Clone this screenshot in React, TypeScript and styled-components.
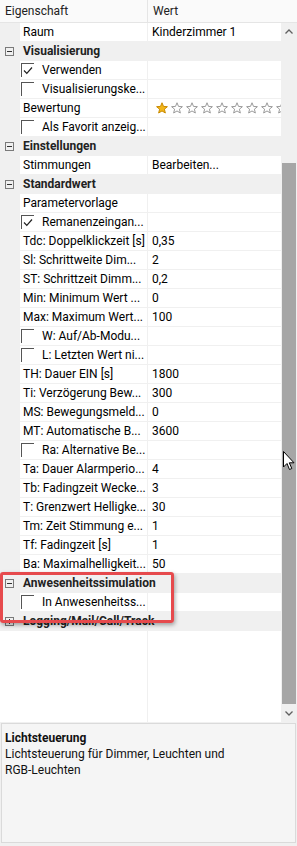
import React, { FC } from "react";
import styled, { createGlobalStyle } from "styled-components";

const GlobalStyle = createGlobalStyle`
  body {
    margin: 0;
    background: #f0f0f0;
    font-family: Roboto, "Noto Sans", sans-serif;
    font-size: 12px;
    color: #000;
  }
`;

const Window = styled.div`
  width: 297px;
  height: 846px;
  display: flex;
  flex-direction: column;
  background: #f0f0f0;
  overflow: hidden;
`;

const Grid = styled.div`
  position: relative;
  height: 722px;
  display: flex;
  flex-direction: column;
  background: #fff;
`;

const Header = styled.div`
  height: 22px;
  display: grid;
  grid-template-columns: 148px 1fr;
  background: #fafafa;
  border-bottom: 1px solid #e5e5e5;
`;

const HeaderCell = styled.div<{ $divider?: boolean }>`
  display: flex;
  align-items: center;
  padding-left: 5px;
  border-right: ${(p) => (p.$divider ? "1px solid #e5e5e5" : "none")};
  color: #222;
`;

const Body = styled.div`
  flex: 1;
  display: flex;
  min-height: 0;
`;

const Rows = styled.div`
  flex: 1;
  display: flex;
  flex-direction: column;
  background: #fff;
`;

const Row = styled.div<{ $group?: boolean }>`
  height: 18px;
  flex: none;
  display: grid;
  grid-template-columns: 148px 1fr;
  border-bottom: 1px solid #f0f0f0;
  background: ${(p) => (p.$group ? "#f0f0f0" : "#fff")};
`;

const NameCell = styled.div`
  display: flex;
  align-items: center;
  min-width: 0;
  border-right: 1px solid #f0f0f0;
  white-space: nowrap;
  overflow: hidden;
`;

const Gutter = styled.div`
  width: 20px;
  align-self: stretch;
  flex: none;
  background: #f0f0f0;
`;

const NameText = styled.span<{ $indent?: number }>`
  padding-left: ${(p) => p.$indent ?? 3}px;
  overflow: hidden;
`;

const GroupName = styled.div`
  grid-column: 1 / span 2;
  display: flex;
  align-items: center;
  font-weight: bold;
  color: #222;
  white-space: nowrap;
  overflow: hidden;
`;

const Toggle = styled.span<{ $open?: boolean }>`
  width: 7px;
  height: 7px;
  margin: 0 9px 0 5px;
  border: 1px solid #7a7a7a;
  position: relative;
  flex: none;
  &::before {
    content: "";
    position: absolute;
    left: 1px;
    right: 1px;
    top: 3px;
    height: 1px;
    background: #333;
  }
  &::after {
    content: "";
    display: ${(p) => (p.$open ? "none" : "block")};
    position: absolute;
    top: 1px;
    bottom: 1px;
    left: 3px;
    width: 1px;
    background: #333;
  }
`;

const CheckBox = styled.span`
  width: 13px;
  height: 14px;
  margin-left: 1px;
  box-sizing: border-box;
  border-top: 1px solid #555;
  border-left: 1px solid #555;
  flex: none;
  display: flex;
  align-items: center;
  justify-content: center;
`;

const ValueCell = styled.div`
  display: flex;
  align-items: center;
  padding-left: 4px;
  white-space: nowrap;
  overflow: hidden;
`;

const Stars = styled.div`
  display: flex;
  align-items: center;
  gap: 3px;
  padding-left: 8px;
  overflow: hidden;
`;

const Filler = styled.div`
  flex: 1;
  display: grid;
  grid-template-columns: 148px 1fr;
  & > div:first-child {
    border-right: 1px solid #f0f0f0;
  }
`;

const ScrollTrack = styled.div`
  width: 16px;
  flex: none;
  display: flex;
  flex-direction: column;
  background: #f0f0f0;
`;

const ScrollArrow = styled.div`
  height: 17px;
  display: flex;
  align-items: center;
  justify-content: center;
  flex: none;
`;

const ScrollGap = styled.div<{ $h: number }>`
  height: ${(p) => p.$h}px;
  flex: none;
`;

const Thumb = styled.div`
  flex: 1;
  margin: 0 1px;
  background: #a6a6a6;
`;

const Highlight = styled.div`
  position: absolute;
  left: 0;
  top: 572px;
  width: 168px;
  height: 45px;
  border: 3px solid #e64a4d;
  border-radius: 3px;
  box-shadow: 1px 2px 4px rgba(0, 0, 0, 0.35);
  pointer-events: none;
`;

const Cursor = styled.svg`
  position: absolute;
  left: 283px;
  top: 451px;
`;

const Description = styled.div`
  margin: 1px 1px 0 1px;
  height: 120px;
  box-sizing: border-box;
  border: 1px solid #dadada;
  background: #f5f5f5;
  padding: 6px 3px;
  line-height: 16px;
`;

const DescTitle = styled.div`
  font-weight: bold;
  color: #111;
`;

const DescText = styled.div`
  color: #111;
  width: 240px;
`;

const Check: FC = () => (
  <svg width="10" height="9" viewBox="0 0 10 9">
    <path d="M1 4.5 L3.8 7.3 L9 1.5" fill="none" stroke="#222" strokeWidth="1.2" />
  </svg>
);

const Star: FC<{ filled?: boolean }> = ({ filled }) => (
  <svg width="12" height="12" viewBox="0 0 24 24" style={{ flex: "none" }}>
    <path
      d="M12 1.5 L15 8.8 L22.8 9.4 L16.8 14.4 L18.7 22 L12 17.9 L5.3 22 L7.2 14.4 L1.2 9.4 L9 8.8 Z"
      fill={filled ? "#f2b61b" : "#fff"}
      stroke={filled ? "#c98a00" : "#9a9a9a"}
      strokeWidth="2"
      strokeLinejoin="round"
    />
  </svg>
);

type Item =
  | { kind: "group"; name: string; open: boolean }
  | { kind: "prop"; name: string; value?: React.ReactNode }
  | { kind: "check"; name: string; checked?: boolean; value?: React.ReactNode };

const items: Item[] = [
  { kind: "prop", name: "Raum", value: "Kinderzimmer 1" },
  { kind: "group", name: "Visualisierung", open: true },
  { kind: "check", name: "Verwenden", checked: true },
  { kind: "check", name: "Visualisierungske..." },
  { kind: "prop", name: "Bewertung", value: "stars" },
  { kind: "check", name: "Als Favorit anzeig..." },
  { kind: "group", name: "Einstellungen", open: true },
  { kind: "prop", name: "Stimmungen", value: "Bearbeiten..." },
  { kind: "group", name: "Standardwert", open: true },
  { kind: "prop", name: "Parametervorlage" },
  { kind: "check", name: "Remanenzeingan...", checked: true },
  { kind: "prop", name: "Tdc: Doppelklickzeit [s]", value: "0,35" },
  { kind: "prop", name: "Sl: Schrittweite Dim...", value: "2" },
  { kind: "prop", name: "ST: Schrittzeit Dimm...", value: "0,2" },
  { kind: "prop", name: "Min: Minimum Wert ...", value: "0" },
  { kind: "prop", name: "Max: Maximum Wert...", value: "100" },
  { kind: "check", name: "W: Auf/Ab-Modu..." },
  { kind: "check", name: "L: Letzten Wert ni..." },
  { kind: "prop", name: "TH: Dauer EIN [s]", value: "1800" },
  { kind: "prop", name: "Ti: Verzögerung Bew...", value: "300" },
  { kind: "prop", name: "MS: Bewegungsmeld...", value: "0" },
  { kind: "prop", name: "MT: Automatische B...", value: "3600" },
  { kind: "check", name: "Ra: Alternative Be..." },
  { kind: "prop", name: "Ta: Dauer Alarmperio...", value: "4" },
  { kind: "prop", name: "Tb: Fadingzeit Wecke...", value: "3" },
  { kind: "prop", name: "T: Grenzwert Helligke...", value: "30" },
  { kind: "prop", name: "Tm: Zeit Stimmung e...", value: "1" },
  { kind: "prop", name: "Tf: Fadingzeit [s]", value: "1" },
  { kind: "prop", name: "Ba: Maximalhelligkeit...", value: "50" },
  { kind: "group", name: "Anwesenheitssimulation", open: true },
  { kind: "check", name: "In Anwesenheitss..." },
  { kind: "group", name: "Logging/Mail/Call/Track", open: false },
];

const renderValue = (v?: React.ReactNode) =>
  v === "stars" ? (
    <Stars>
      {Array.from({ length: 10 }).map((_, i) => (
        <Star key={i} filled={i === 0} />
      ))}
    </Stars>
  ) : (
    <ValueCell>{v}</ValueCell>
  );

const PropertyRow: FC<{ item: Item }> = ({ item }) => {
  if (item.kind === "group") {
    return (
      <Row $group>
        <GroupName>
          <Toggle $open={item.open} />
          {item.name}
        </GroupName>
      </Row>
    );
  }
  return (
    <Row>
      <NameCell>
        <Gutter />
        {item.kind === "check" && (
          <CheckBox>{item.checked && <Check />}</CheckBox>
        )}
        <NameText $indent={item.kind === "check" ? 8 : 3}>{item.name}</NameText>
      </NameCell>
      {renderValue(item.value)}
    </Row>
  );
};

const App: FC = () => (
  <Window>
    <GlobalStyle />
    <Grid>
      <Header>
        <HeaderCell $divider>Eigenschaft</HeaderCell>
        <HeaderCell>Wert</HeaderCell>
      </Header>
      <Body>
        <Rows>
          {items.map((it) => (
            <PropertyRow key={it.name} item={it} />
          ))}
          <Filler>
            <div />
            <div />
          </Filler>
        </Rows>
        <ScrollTrack>
          <ScrollArrow>
            <svg width="8" height="5" viewBox="0 0 8 5">
              <path d="M0.5 4.5 L4 1 L7.5 4.5" fill="none" stroke="#606060" strokeWidth="1.3" />
            </svg>
          </ScrollArrow>
          <ScrollGap $h={123} />
          <Thumb />
          <ScrollGap $h={1} />
          <ScrollArrow>
            <svg width="8" height="5" viewBox="0 0 8 5">
              <path d="M0.5 0.5 L4 4 L7.5 0.5" fill="none" stroke="#606060" strokeWidth="1.3" />
            </svg>
          </ScrollArrow>
        </ScrollTrack>
      </Body>
      <Highlight />
      <Cursor width="12" height="20" viewBox="0 0 12 20">
        <path d="M0.5 0.5 L0.5 16 L4 12.5 L6.5 18.5 L8.8 17.5 L6.3 11.8 L11 11.8 Z" fill="#fff" stroke="#000" strokeWidth="1" />
      </Cursor>
    </Grid>
    <Description>
      <DescTitle>Lichtsteuerung</DescTitle>
      <DescText>Lichtsteuerung für Dimmer, Leuchten und RGB-Leuchten</DescText>
    </Description>
  </Window>
);

export default App;
